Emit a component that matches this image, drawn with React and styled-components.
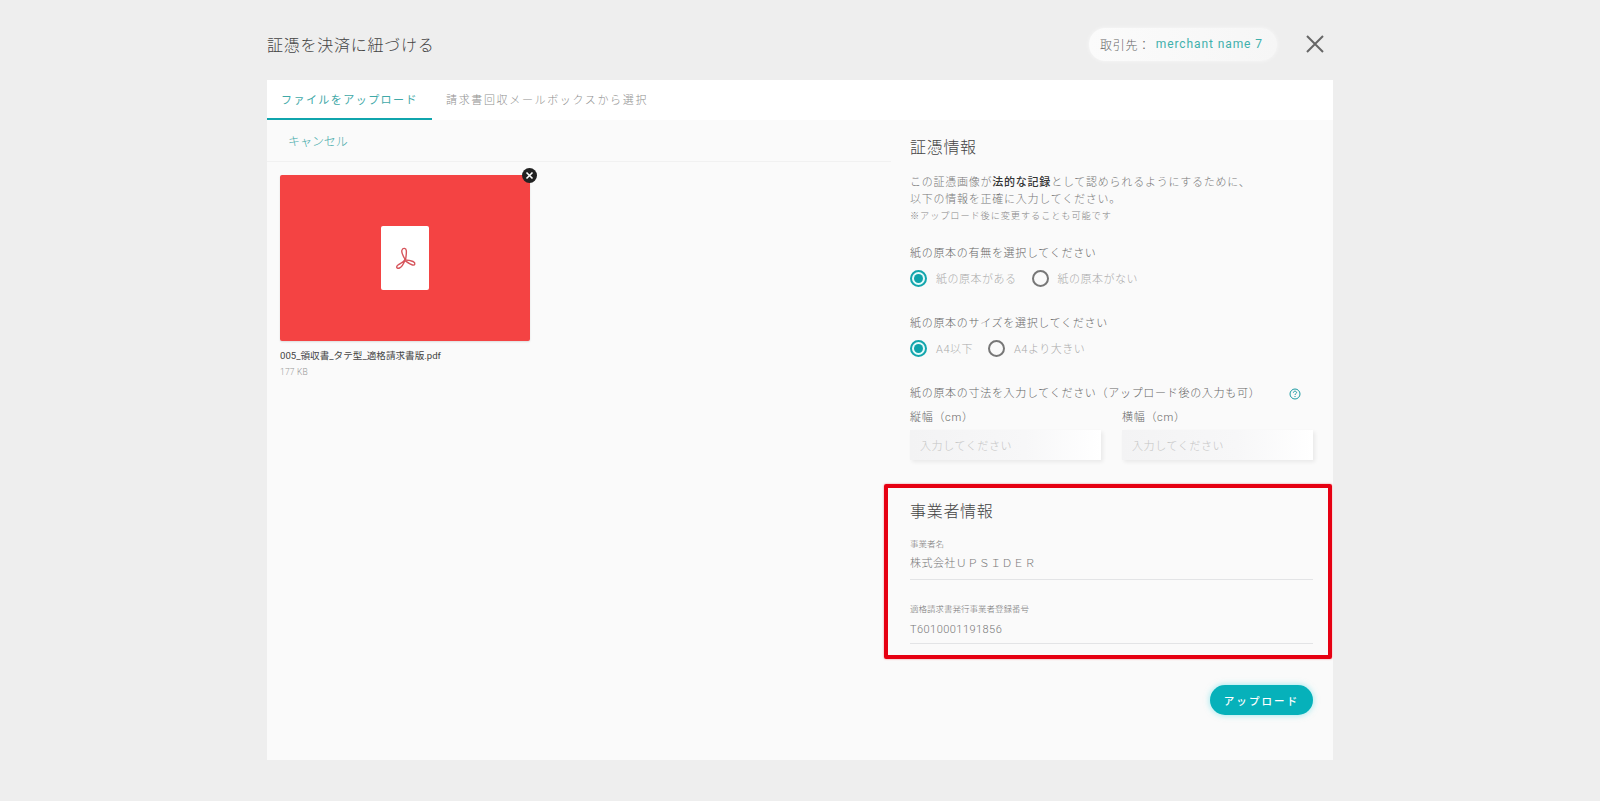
import React from "react";
import styled, { createGlobalStyle } from "styled-components";

const Global = createGlobalStyle`
  html, body { margin: 0; padding: 0; background: #eeeeee; }
  body { font-family: Roboto, "Noto Sans CJK JP", sans-serif; color: #666; font-weight: 300; }
  * { box-sizing: border-box; }
`;

const Page = styled.div`
  width: 1066px;
  height: 801px;
  margin: 0 auto;
  overflow: hidden;
`;
const Header = styled.header`
  height: 80px;
  display: flex;
  align-items: center;
  justify-content: space-between;
  padding: 8px 8px 0 0;
`;
const Title = styled.h1`
  margin: 0;
  font-size: 16px;
  font-weight: 300;
  letter-spacing: 0.75px;
  color: #444;
`;
const HeaderRight = styled.div`
  display: flex;
  align-items: center;
  gap: 28px;
`;
const MerchantPill = styled.div`
  width: 188px;
  height: 33px;
  padding: 0 14px 0 11px;
  display: flex;
  align-items: center;
  background: linear-gradient(90deg, #fbfbfb 0%, #f6f6f6 100%);
  border-radius: 16px;
  box-shadow: 0 0 4px rgba(255, 255, 255, 0.6);
  font-size: 12px;
  letter-spacing: 0.7px;
  color: #666;
  white-space: nowrap;
`;
const MerchantName = styled.span`
  margin-left: 5px;
  color: #3fb0ac;
  font-weight: 400;
  letter-spacing: 0.9px;
`;
const CloseButton = styled.button`
  width: 20px;
  height: 20px;
  padding: 0;
  border: 0;
  background: none;
  display: block;
  svg { display: block; }
`;
const Panel = styled.main`
  height: 680px;
  background: #fafafa;
  display: flex;
  flex-direction: column;
`;
const Tabs = styled.nav`
  height: 40px;
  flex: none;
  background: #fff;
  display: flex;
`;
const Tab = styled.div`
  width: ${(p) => p.$w}px;
  padding-left: ${(p) => p.$pad}px;
  display: flex;
  align-items: center;
  font-size: 11px;
  letter-spacing: ${(p) => (p.$active ? 1.45 : 1.65)}px;
  white-space: nowrap;
  color: ${(p) => (p.$active ? "#3fa9a8" : "#8f8f8f")};
  font-weight: ${(p) => (p.$active ? 400 : 300)};
  border-bottom: 2px solid ${(p) => (p.$active ? "#10a5ad" : "transparent")};
`;
const Columns = styled.div`
  flex: 1;
  display: flex;
`;
const LeftColumn = styled.section`
  width: 624px;
  flex: none;
`;
const CancelBar = styled.div`
  height: 42px;
  padding-left: 21px;
  display: flex;
  align-items: center;
  border-bottom: 1px solid #f1f1f1;
  font-size: 12px;
  letter-spacing: -0.05px;
  color: #3fa9a8;
`;
const FileArea = styled.div`
  padding: 13px 13px;
`;
const Thumb = styled.div`
  position: relative;
  width: 250px;
  height: 166px;
  background: #f44343;
  border-radius: 2px;
  display: flex;
  align-items: center;
  justify-content: center;
  box-shadow: 0 1px 2px rgba(0, 0, 0, 0.12);
`;
const Doc = styled.div`
  width: 48px;
  height: 64px;
  background: #fff;
  border-radius: 2px;
  display: flex;
  align-items: center;
  justify-content: center;
`;
const RemoveBadge = styled.div`
  position: absolute;
  top: -7px;
  right: -7px;
  width: 15px;
  height: 15px;
  border-radius: 50%;
  background: #222;
  display: flex;
  align-items: center;
  justify-content: center;
`;
const FileName = styled.div`
  margin-top: 7px;
  height: 16px;
  line-height: 16px;
  font-size: 9.6px;
  font-weight: 400;
  color: #444;
  white-space: nowrap;
`;
const FileSize = styled.div`
  height: 16px;
  line-height: 16px;
  font-size: 8.5px;
  letter-spacing: 0.2px;
  color: #999;
`;
const RightColumn = styled.section`
  position: relative;
  flex: 1;
  padding: 16px 20px 0 19px;
`;
const SectionTitle = styled.h2`
  margin: ${(p) => p.$mt || 0}px 0 0;
  height: 24px;
  line-height: 24px;
  font-size: 16px;
  font-weight: 300;
  letter-spacing: 0.7px;
  color: #444;
`;
const Intro = styled.p`
  margin: 14px 0 0;
  font-size: 11px;
  line-height: 17px;
  letter-spacing: 0.76px;
  color: #777;
  strong { color: #333; font-weight: 500; }
`;
const Note = styled.span`
  display: block;
  font-size: 9.2px;
  letter-spacing: 0.9px;
  color: #888;
  margin-top: -1px;
`;
const Label = styled.div`
  margin-top: ${(p) => p.$mt}px;
  height: 18px;
  line-height: 18px;
  font-size: 11px;
  letter-spacing: 0.7px;
  color: #666;
  white-space: nowrap;
  display: flex;
  align-items: center;
  justify-content: space-between;
`;
const HelpWrap = styled.span`
  display: flex;
  margin-right: 12px;
  color: #1b9aa2;
`;
const RadioRow = styled.div`
  margin-top: ${(p) => p.$mt}px;
  height: 20px;
  display: flex;
  align-items: center;
`;
const RadioItem = styled.label`
  display: flex;
  align-items: center;
  margin-right: 15px;
  font-size: 11px;
  letter-spacing: 0.5px;
  color: #aaa;
  white-space: nowrap;
`;
const RadioCircle = styled.span`
  width: 17px;
  height: 17px;
  margin-right: 9px;
  border-radius: 50%;
  border: 2px solid ${(p) => (p.$on ? "#14a6ad" : "#777")};
  display: flex;
  align-items: center;
  justify-content: center;
  background: ${(p) => (p.$on ? "#e6fbfb" : "transparent")};
  &::after {
    content: "";
    display: ${(p) => (p.$on ? "block" : "none")};
    width: 9px;
    height: 9px;
    border-radius: 50%;
    background: #0fa3aa;
  }
`;
const InputGrid = styled.div`
  margin-top: 6px;
  display: grid;
  grid-template-columns: 191px 191px;
  column-gap: 21px;
`;
const InputLabel = styled.div`
  height: 18px;
  line-height: 18px;
  font-size: 11px;
  letter-spacing: 0.7px;
  color: #666;
`;
const InputBox = styled.div`
  margin-top: 3px;
  height: 30px;
  padding-left: 10px;
  display: flex;
  align-items: center;
  font-size: 11px;
  letter-spacing: 0.6px;
  color: #c4c4c4;
  background: linear-gradient(90deg, #f3f3f4 0%, #f7f7f8 60%, #ffffff 100%);
  box-shadow: 2px 2px 4px rgba(0, 0, 0, 0.07);
`;
const Field = styled.div`
  margin-top: ${(p) => p.$mt}px;
  border-bottom: 1px solid #e3e4e6;
  height: ${(p) => p.$h}px;
`;
const FieldLabel = styled.div`
  height: 12px;
  line-height: 12px;
  font-size: 8.5px;
  color: #777;
  white-space: nowrap;
`;
const FieldValue = styled.div`
  margin-top: ${(p) => p.$mt}px;
  height: 20px;
  line-height: 20px;
  font-size: 11px;
  letter-spacing: 0.45px;
  color: #777;
`;
const Actions = styled.div`
  margin-top: 41px;
  display: flex;
  justify-content: flex-end;
`;
const UploadButton = styled.button`
  width: 103px;
  height: 30px;
  border: 0;
  border-radius: 15px;
  background: #06b1ba;
  color: #fff;
  font-family: inherit;
  font-size: 10.5px;
  font-weight: 500;
  letter-spacing: 2.1px;
  box-shadow: 0 0 6px rgba(60, 215, 225, 0.55);
`;
const Highlight = styled.div`
  position: absolute;
  left: -7px;
  right: 1px;
  top: 364px;
  height: 175px;
  border: 4px solid #e60012;
  border-radius: 2px;
  box-shadow: 0 0 2px rgba(230, 0, 18, 0.5);
  pointer-events: none;
`;

export default function App() {
  return (
    <>
      <Global />
      <Page>
        <Header>
          <Title>証憑を決済に紐づける</Title>
          <HeaderRight>
            <MerchantPill>
              取引先：<MerchantName>merchant name 7</MerchantName>
            </MerchantPill>
            <CloseButton aria-label="閉じる">
              <svg width="20" height="20" viewBox="0 0 20 20" fill="none" stroke="#666" strokeWidth="2">
                <path d="M2 2 L18 18 M18 2 L2 18" />
              </svg>
            </CloseButton>
          </HeaderRight>
        </Header>
        <Panel>
          <Tabs>
            <Tab $active $w={165} $pad={14}>ファイルをアップロード</Tab>
            <Tab $w={240} $pad={14}>請求書回収メールボックスから選択</Tab>
          </Tabs>
          <Columns>
            <LeftColumn>
              <CancelBar>キャンセル</CancelBar>
              <FileArea>
                <Thumb>
                  <Doc>
                    <svg width="21" height="22" viewBox="0 0 21 22" fill="none" stroke="#d6545b" strokeWidth="1.4">
                      <path d="M10.5 13 C8 9 6 5 7 3 C8 0.5 11 1 11.3 3.5 C11.6 6 11 10 10.5 13" />
                      <path d="M10.5 12 C9 15 6 16 3 18 C0.5 20 2 22 4.5 21 C7 20 9 16 10.5 12" />
                      <path d="M9 13 C12 13 15 13 18 14.5 C21 16 20 18.5 17.5 18 C15 17.5 12 15 9 13" />
                    </svg>
                  </Doc>
                  <RemoveBadge>
                    <svg width="9" height="9" viewBox="0 0 9 9" fill="none" stroke="#fff" strokeWidth="1.6">
                      <path d="M1.5 1.5 L7.5 7.5 M7.5 1.5 L1.5 7.5" />
                    </svg>
                  </RemoveBadge>
                </Thumb>
                <FileName>005_領収書_タテ型_適格請求書版.pdf</FileName>
                <FileSize>177 KB</FileSize>
              </FileArea>
            </LeftColumn>
            <RightColumn>
              <SectionTitle>証憑情報</SectionTitle>
              <Intro>
                この証憑画像が<strong>法的な記録</strong>として認められるようにするために、
                <br />
                以下の情報を正確に入力してください。
                <Note>※アップロード後に変更することも可能です</Note>
              </Intro>
              <Label $mt={21}>紙の原本の有無を選択してください</Label>
              <RadioRow $mt={5}>
                <RadioItem><RadioCircle $on />紙の原本がある</RadioItem>
                <RadioItem><RadioCircle />紙の原本がない</RadioItem>
              </RadioRow>
              <Label $mt={27}>紙の原本のサイズを選択してください</Label>
              <RadioRow $mt={5}>
                <RadioItem><RadioCircle $on />A4以下</RadioItem>
                <RadioItem><RadioCircle />A4より大きい</RadioItem>
              </RadioRow>
              <Label $mt={27}>
                紙の原本の寸法を入力してください（アップロード後の入力も可）
                <HelpWrap>
                  <svg width="12" height="12" viewBox="0 0 12 12" fill="none" stroke="currentColor" strokeWidth="1">
                    <circle cx="6" cy="6" r="5" />
                    <path d="M4.4 4.7 C4.4 3.7 5.1 3.2 6 3.2 C6.9 3.2 7.6 3.8 7.6 4.6 C7.6 5.6 6 5.7 6 7" />
                    <path d="M6 8 V9" />
                  </svg>
                </HelpWrap>
              </Label>
              <InputGrid>
                <div>
                  <InputLabel>縦幅（cm）</InputLabel>
                  <InputBox>入力してください</InputBox>
                </div>
                <div>
                  <InputLabel>横幅（cm）</InputLabel>
                  <InputBox>入力してください</InputBox>
                </div>
              </InputGrid>
              <SectionTitle $mt={40}>事業者情報</SectionTitle>
              <Field $mt={14} $h={42}>
                <FieldLabel>事業者名</FieldLabel>
                <FieldValue $mt={4}>株式会社ＵＰＳＩＤＥＲ</FieldValue>
              </Field>
              <Field $mt={23} $h={41}>
                <FieldLabel>適格請求書発行事業者登録番号</FieldLabel>
                <FieldValue $mt={5}>T6010001191856</FieldValue>
              </Field>
              <Actions>
                <UploadButton>アップロード</UploadButton>
              </Actions>
              <Highlight />
            </RightColumn>
          </Columns>
        </Panel>
      </Page>
    </>
  );
}
